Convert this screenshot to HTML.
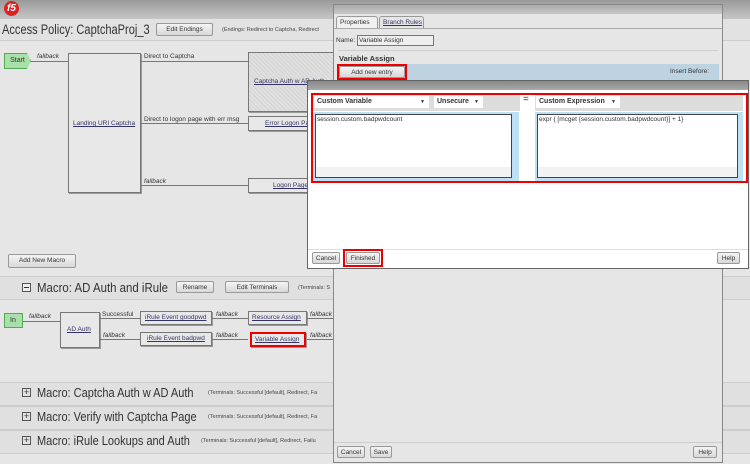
<!DOCTYPE html>
<html><head><style>
*{margin:0;padding:0;box-sizing:border-box}
body{width:750px;height:464px;overflow:hidden;background:#e6e6e6;font-family:"Liberation Sans",sans-serif;font-size:7px;color:#333;position:relative}
.a{position:absolute}
.box{position:absolute;border:1px solid #777;background:#e8e8e8;box-shadow:1px 1px 0 #999}
.lnk{color:#336;text-decoration:underline;font-size:6.5px;white-space:nowrap}
.btn{position:absolute;border:1px solid #999;border-radius:2px;background:linear-gradient(#f4f4f4,#d8d8d8);font-size:6.5px;color:#333;text-align:center;line-height:12px}
.ln{position:absolute;height:1px;background:#777}
.lbl{position:absolute;font-size:6.5px;font-style:italic;color:#333}
.txt{position:absolute;font-size:6.5px;color:#333;white-space:nowrap}
.mh{position:absolute;left:0;width:750px;height:24px;background:#e0e0e0;border-top:1px solid #ccc;border-bottom:1px solid #ccc}
.mt{position:absolute;font-size:13px;color:#333;white-space:nowrap;transform:scaleX(0.88);transform-origin:0 0}
.term{font-size:5.5px;color:#444;white-space:nowrap;position:absolute}
</style></head><body>
<div class="a" style="left:0;top:0;width:750px;height:19px;background:linear-gradient(#9a9a9a,#c6c6c6)"></div>
<div class="a" style="left:4px;top:1px;width:15px;height:15px;border-radius:50%;background:#d22;color:#fff;font-weight:bold;font-size:10px;text-align:center;line-height:15px;font-style:italic">f5</div>
<div class="a" style="left:0;top:19px;width:750px;height:22px;background:#e2e2e2;border-bottom:1px solid #ccc"></div>
<div class="mt" style="left:2px;top:22px;font-size:13.5px;transform:scaleX(0.82)">Access Policy: CaptchaProj_3</div>
<div class="btn" style="left:156px;top:23px;width:57px;height:13px">Edit Endings</div>
<div class="term" style="left:222px;top:27px">(Endings: Redirect to Captcha, Redirect</div>

<div class="a" style="left:4px;top:53px;width:27px;height:16px;background:#a9dfa9;border:1px solid #5a5;font-size:7px;text-align:center;line-height:14px;clip-path:polygon(0 0,85% 0,100% 50%,85% 100%,0 100%)">Start</div>
<div class="ln" style="left:31px;top:61px;width:37px"></div><div class="lbl" style="left:37px;top:53px">fallback</div>
<div class="box" style="left:68px;top:53px;width:73px;height:140px"></div>
<div class="lnk a" style="left:73px;top:120px">Landing URI Captcha</div>
<div class="ln" style="left:141px;top:61px;width:107px"></div><div class="txt" style="left:144px;top:53px">Direct to Captcha</div>
<div class="ln" style="left:141px;top:123px;width:107px"></div><div class="txt" style="left:144px;top:116px">Direct to logon page with err msg</div>
<div class="ln" style="left:141px;top:185px;width:107px"></div><div class="lbl" style="left:144px;top:178px">fallback</div>
<div class="box" style="left:248px;top:52px;width:90px;height:60px;background:repeating-linear-gradient(45deg,#e0e0e0 0 2px,#d4d4d4 2px 3px)"></div>
<div class="lnk a" style="left:254px;top:78px">Captcha Auth w AD Auth</div>
<div class="box" style="left:248px;top:116px;width:90px;height:15px"></div><div class="lnk a" style="left:265px;top:120px">Error Logon Page</div>
<div class="box" style="left:248px;top:178px;width:90px;height:15px"></div><div class="lnk a" style="left:273px;top:182px">Logon Page</div>
<div class="btn" style="left:8px;top:254px;width:68px;height:14px">Add New Macro</div>

<div class="mh" style="top:276px"></div>
<div class="a" style="left:22px;top:283px;width:9px;height:9px;border:1px solid #555;background:#eee"></div>
<div class="a" style="left:24px;top:287px;width:5px;height:1px;background:#333"></div>
<div class="mt" style="left:37px;top:280px">Macro: AD Auth and iRule</div>
<div class="btn" style="left:176px;top:281px;width:38px;height:12px">Rename</div>
<div class="btn" style="left:225px;top:281px;width:64px;height:12px">Edit Terminals</div>
<div class="term" style="left:298px;top:285px">(Terminals: S</div>
<div class="a" style="left:4px;top:313px;width:19px;height:15px;background:#a9dfa9;border:1px solid #5a5;font-size:7px;line-height:13px;padding-left:5px">In</div>
<div class="ln" style="left:23px;top:321px;width:37px"></div><div class="lbl" style="left:29px;top:313px">fallback</div>
<div class="box" style="left:60px;top:312px;width:40px;height:36px"></div><div class="lnk a" style="left:67px;top:326px">AD Auth</div>
<div class="ln" style="left:100px;top:318px;width:40px"></div><div class="txt" style="left:102px;top:311px">Successful</div>
<div class="ln" style="left:100px;top:339px;width:40px"></div><div class="lbl" style="left:103px;top:332px">fallback</div>
<div class="box" style="left:140px;top:311px;width:72px;height:14px"></div><div class="lnk a" style="left:145px;top:314px">iRule Event goodpwd</div>
<div class="box" style="left:140px;top:332px;width:72px;height:14px"></div><div class="lnk a" style="left:147px;top:335px">iRule Event badpwd</div>
<div class="ln" style="left:212px;top:318px;width:36px"></div><div class="lbl" style="left:216px;top:311px">fallback</div>
<div class="ln" style="left:212px;top:339px;width:36px"></div><div class="lbl" style="left:216px;top:332px">fallback</div>
<div class="box" style="left:248px;top:311px;width:59px;height:14px"></div><div class="lnk a" style="left:252px;top:314px">Resource Assign</div>
<div class="box" style="left:250px;top:332px;width:56px;height:15px;border:2px solid #e00"></div><div class="lnk a" style="left:255px;top:336px">Variable Assign</div>
<div class="ln" style="left:307px;top:318px;width:30px"></div><div class="lbl" style="left:310px;top:311px">fallback</div>
<div class="ln" style="left:307px;top:339px;width:30px"></div><div class="lbl" style="left:310px;top:332px">fallback</div>

<div class="mh" style="top:382px"></div>
<div class="mh" style="top:406px"></div>
<div class="mh" style="top:430px"></div>
<div class="a" style="left:22px;top:388px;width:9px;height:9px;border:1px solid #555;font-size:9px;line-height:7px;text-align:center">+</div>
<div class="mt" style="left:37px;top:386px;font-size:12.5px">Macro: Captcha Auth w AD Auth</div>
<div class="term" style="left:208px;top:390px">(Terminals: Successful [default], Redirect, Fa</div>
<div class="a" style="left:22px;top:412px;width:9px;height:9px;border:1px solid #555;font-size:9px;line-height:7px;text-align:center">+</div>
<div class="mt" style="left:37px;top:410px;font-size:12.5px">Macro: Verify with Captcha Page</div>
<div class="term" style="left:208px;top:414px">(Terminals: Successful [default], Redirect, Fa</div>
<div class="a" style="left:22px;top:436px;width:9px;height:9px;border:1px solid #555;font-size:9px;line-height:7px;text-align:center">+</div>
<div class="mt" style="left:37px;top:434px;font-size:12.5px">Macro: iRule Lookups and Auth</div>
<div class="term" style="left:201px;top:438px">(Terminals: Successful [default], Redirect, Failu</div>

<div class="a" style="left:333px;top:4px;width:390px;height:459px;background:#e6e6e6;border:1px solid #888"></div>
<div class="a" style="left:334px;top:5px;width:388px;height:9px;background:linear-gradient(#aaa,#c8c8c8)"></div>
<div class="a" style="left:336px;top:16px;width:42px;height:12px;border:1px solid #999;border-bottom:none;border-radius:3px 3px 0 0;background:#f0f0f0;font-size:6.5px;line-height:11px;padding-left:3px">Properties</div>
<div class="a" style="left:379px;top:16px;width:45px;height:12px;border:1px solid #999;border-bottom:none;border-radius:3px 3px 0 0;font-size:7px;line-height:11px;padding-left:3px"><span class="lnk">Branch Rules</span></div>
<div class="a" style="left:334px;top:28px;width:388px;height:1px;background:#aaa"></div>
<div class="txt" style="left:336px;top:37px">Name:</div>
<div class="a" style="left:357px;top:35px;width:77px;height:11px;border:1px solid #777;background:#eee;font-size:6.5px;padding-left:1px;line-height:9px">Variable Assign</div>
<div class="a" style="left:338px;top:50px;width:380px;height:1px;background:#ccc"></div>
<div class="txt" style="left:339px;top:54px;font-weight:bold;font-size:7.5px">Variable Assign</div>
<div class="a" style="left:337px;top:64px;width:382px;height:16px;background:#bdd3e2"></div>
<div class="a" style="left:337px;top:64px;width:70px;height:16px;border:2px solid #e00"></div>
<div class="btn" style="left:339px;top:66px;width:66px;height:12px">Add new entry</div>
<div class="txt" style="left:670px;top:68px">Insert Before:</div>
<div class="a" style="left:334px;top:442px;width:388px;height:1px;background:#ccc"></div>
<div class="btn" style="left:337px;top:446px;width:28px;height:12px">Cancel</div>
<div class="btn" style="left:370px;top:446px;width:22px;height:12px">Save</div>
<div class="btn" style="left:693px;top:446px;width:24px;height:12px">Help</div>

<div class="a" style="left:307px;top:80px;width:442px;height:189px;background:#fff;border:1px solid #666"></div>
<div class="a" style="left:308px;top:81px;width:440px;height:9px;background:linear-gradient(#888,#aaa)"></div>
<div class="a" style="left:311px;top:93px;width:437px;height:90px;border:2px solid #e00"></div>
<div class="a" style="left:313px;top:95px;width:207px;height:16px;background:#ddd"></div>
<div class="a" style="left:535px;top:95px;width:208px;height:16px;background:#ddd"></div>
<div class="a" style="left:314px;top:96px;width:115px;height:12px;background:#fff;font-weight:bold;font-size:7px;line-height:12px;padding-left:3px">Custom Variable<span style="position:absolute;right:4px;font-size:5px">▼</span></div>
<div class="a" style="left:434px;top:96px;width:49px;height:12px;background:#fff;font-weight:bold;font-size:7px;line-height:12px;padding-left:3px">Unsecure<span style="position:absolute;right:4px;font-size:5px">▼</span></div>
<div class="txt" style="left:523px;top:94px;font-size:10px">=</div>
<div class="a" style="left:536px;top:96px;width:84px;height:12px;background:#fff;font-weight:bold;font-size:7px;line-height:12px;padding-left:3px">Custom Expression<span style="position:absolute;right:4px;font-size:5px">▼</span></div>
<div class="a" style="left:313px;top:112px;width:206px;height:69px;background:#bde0f5"></div>
<div class="a" style="left:535px;top:112px;width:208px;height:69px;background:#bde0f5"></div>
<div class="a" style="left:315px;top:114px;width:197px;height:64px;background:#fff;border:1px solid #444;font-size:6.5px;padding:1px">session.custom.badpwdcount</div>
<div class="a" style="left:537px;top:114px;width:201px;height:64px;background:#fff;border:1px solid #444;font-size:6.5px;padding:1px">expr { [mcget {session.custom.badpwdcount}] + 1}</div>
<div class="a" style="left:316px;top:167px;width:195px;height:10px;background:#f2f2f2"></div>
<div class="a" style="left:538px;top:167px;width:199px;height:10px;background:#f2f2f2"></div>
<div class="a" style="left:308px;top:249px;width:440px;height:1px;background:#ddd"></div>
<div class="btn" style="left:312px;top:252px;width:28px;height:12px">Cancel</div>
<div class="a" style="left:343px;top:249px;width:40px;height:18px;border:2px solid #e00"></div>
<div class="btn" style="left:346px;top:252px;width:34px;height:12px">Finished</div>
<div class="btn" style="left:717px;top:252px;width:23px;height:12px">Help</div>
</body></html>
